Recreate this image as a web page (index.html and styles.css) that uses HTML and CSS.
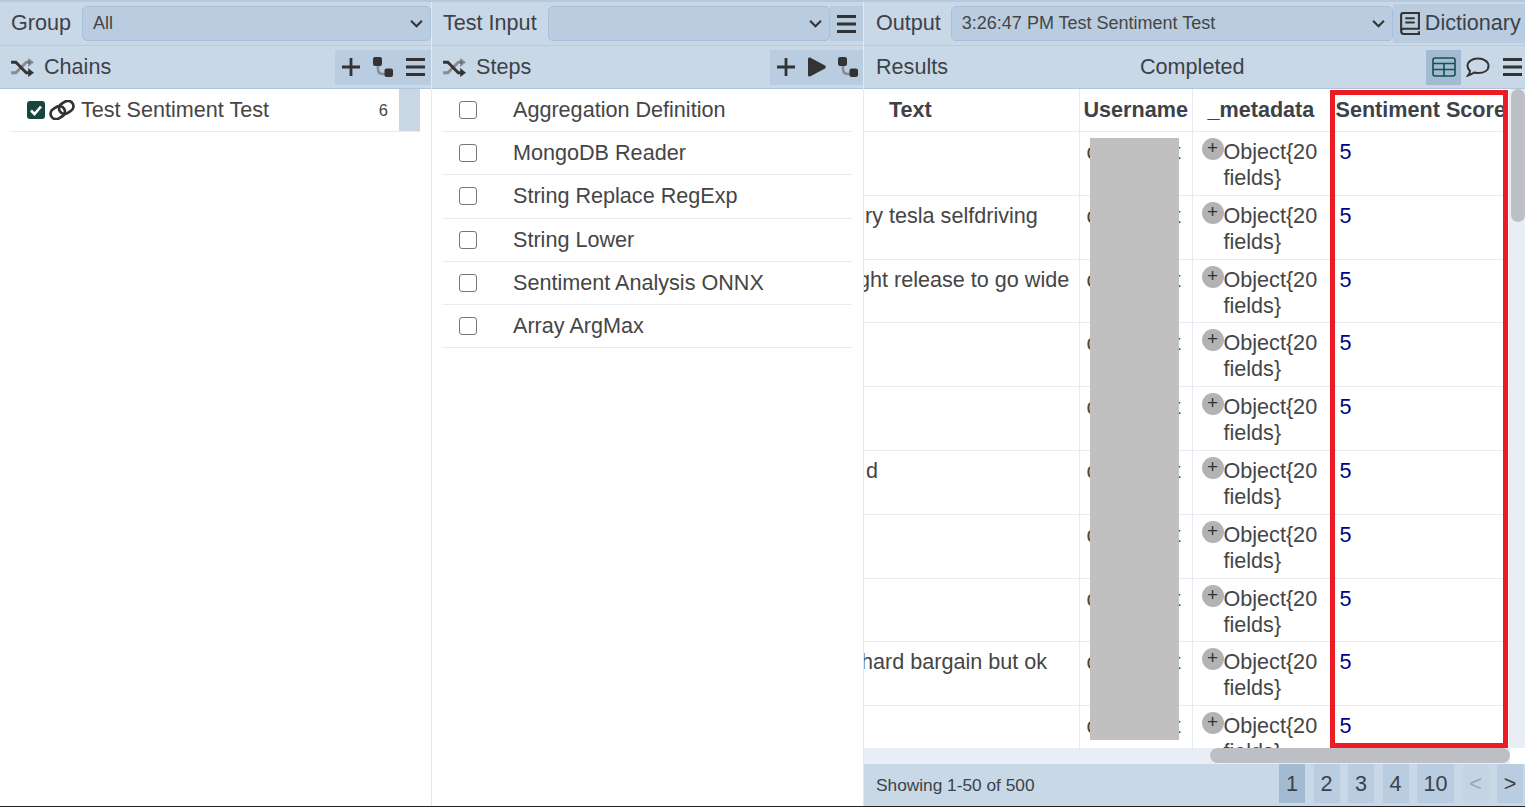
FILE: index.html
```html
<!DOCTYPE html>
<html lang="en">
<head>
	<meta charset="UTF-8">
	<title>Chains</title>
	<link rel="stylesheet" href="styles.css">
</head>
<body>
<svg class="defs" width="0" height="0">
	<symbol id="i-shuffle" viewBox="0 0 24 20">
		<path d="M0 4.500h5l11 11h4" fill="none" stroke="#333" stroke-width="3"/>
		<path d="M18 10.500l6 5-6 4.500z" fill="#333"/>
		<path d="M0 15.500h5l11-11h4" fill="none" stroke="#333" stroke-opacity=".45" stroke-width="3"/>
		<path d="M18 0l6 4.500-6 5z" fill="#333" fill-opacity=".45"/>
	</symbol>
	<symbol id="i-plus" viewBox="0 0 18 18">
		<path d="M9 0v18M0 9h18" stroke="#333" stroke-width="2.800"/>
	</symbol>
	<symbol id="i-menu" viewBox="0 0 19 18">
		<path d="M0 1.500h19M0 9h19M0 16.500h19" stroke="#333" stroke-width="3"/>
	</symbol>
	<symbol id="i-tree" viewBox="0 0 20 20">
		<path d="M5 8v4q0 5 5 5h2" fill="none" stroke="#333" stroke-opacity=".4" stroke-width="2.600"/>
		<rect x="0" y="0" width="9" height="9" rx="2" fill="#333"/>
		<rect x="11.500" y="11.500" width="8.500" height="8.500" rx="2" fill="#333"/>
	</symbol>
	<symbol id="i-play" viewBox="0 0 18 20">
		<path d="M0 2v16q0 2 2 1.500l15-8q1.500-1.500 0-3l-15-8q-2-.5-2 1.500z" fill="#333"/>
	</symbol>
	<symbol id="i-chev" viewBox="0 0 12 8">
		<path d="M1 1.500l5 5 5-5" fill="none" stroke="#333" stroke-width="1.900"/>
	</symbol>
	<symbol id="i-book" viewBox="0 0 20 22">
		<path d="M2 18V3q0-2 2-2h15v15H4.500Q2 16 2 18.500T4.500 21H19v-2.500" fill="none" stroke="#333" stroke-width="2"/>
		<path d="M6 6h9M6 10h9" stroke="#333" stroke-width="2"/>
	</symbol>
	<symbol id="i-table" viewBox="0 0 24 20">
		<rect x="1" y="1" width="22" height="18" rx="2" fill="none" stroke="#17504d" stroke-width="1.600"/>
		<path d="M1 6.500h22M1 12.500h22M12 6.500V19" stroke="#17504d" stroke-width="1.600"/>
	</symbol>
	<symbol id="i-chat" viewBox="0 0 24 20">
		<path d="M12 1.500c6 0 10.500 3 10.500 7.500s-4.500 7-10.500 7c-1.500 0-3-.2-4-.5-1.500 1.200-3.500 2.500-6 3 1.200-1.300 2-3 2-4.500C2.500 12.500 1.500 11 1.500 9c0-4.500 4.500-7.500 10.500-7.500z" fill="none" stroke="#333" stroke-width="2"/>
	</symbol>
	<symbol id="i-link" viewBox="0 0 26 20">
		<g fill="none" stroke="#333" stroke-width="2.700" transform="rotate(-32 13 10)">
			<rect x="0.500" y="4.500" width="15" height="11" rx="5.500"/>
			<rect x="10.500" y="4.500" width="15" height="11" rx="5.500"/>
		</g>
	</symbol>
</svg>

<div class="app">
	<!-- chains -->
	<section class="pane pane-side">
		<div class="bar bar-top">
			<span class="label">Group</span>
			<div class="select"><span>All</span><svg class="chev"><use href="#i-chev"/></svg></div>
		</div>
		<div class="bar bar-sub">
			<svg class="shuffle"><use href="#i-shuffle"/></svg>
			<span class="label">Chains</span>
			<div class="tools">
				<button class="tool"><svg class="ico"><use href="#i-plus"/></svg></button>
				<button class="tool"><svg class="ico-tree"><use href="#i-tree"/></svg></button>
				<button class="tool"><svg class="ico-menu"><use href="#i-menu"/></svg></button>
			</div>
		</div>
		<ul class="list">
			<li class="chain">
				<span class="check on"><svg viewBox="0 0 18 18" width="18" height="18"><path d="M4 9.500l3.500 3.500 6.500-7.500" fill="none" stroke="#fff" stroke-width="2.600"/></svg></span>
				<svg class="link"><use href="#i-link"/></svg>
				<span class="name">Test Sentiment Test</span>
				<span class="count">6</span>
				<span class="mark"></span>
			</li>
		</ul>
	</section>

	<!-- steps -->
	<section class="pane pane-side">
		<div class="bar bar-top">
			<span class="label">Test Input</span>
			<div class="select select-input"><span></span><svg class="chev"><use href="#i-chev"/></svg></div>
			<button class="tool tool-fill"><svg class="ico-menu"><use href="#i-menu"/></svg></button>
		</div>
		<div class="bar bar-sub">
			<svg class="shuffle"><use href="#i-shuffle"/></svg>
			<span class="label">Steps</span>
			<div class="tools tools-steps">
				<button class="tool"><svg class="ico"><use href="#i-plus"/></svg></button>
				<button class="tool"><svg class="ico-play"><use href="#i-play"/></svg></button>
				<button class="tool"><svg class="ico-tree"><use href="#i-tree"/></svg></button>
			</div>
		</div>
		<ul class="list">
			<li class="step"><span class="check"></span>Aggregation Definition</li>
			<li class="step"><span class="check"></span>MongoDB Reader</li>
			<li class="step"><span class="check"></span>String Replace RegExp</li>
			<li class="step"><span class="check"></span>String Lower</li>
			<li class="step"><span class="check"></span>Sentiment Analysis ONNX</li>
			<li class="step"><span class="check"></span>Array ArgMax</li>
		</ul>
	</section>

	<!-- results -->
	<section class="pane pane-main">
		<div class="bar bar-top">
			<span class="label">Output</span>
			<div class="select select-output"><span>3:26:47 PM Test Sentiment Test</span><svg class="chev"><use href="#i-chev"/></svg></div>
			<button class="tool-dict"><svg class="book"><use href="#i-book"/></svg><span class="dict-text">Dictionary</span></button>
		</div>
		<div class="bar bar-sub">
			<span class="label results">Results</span>
			<span class="label">Completed</span>
			<div class="tools tools-plain">
				<button class="tool active"><svg class="ico-wide"><use href="#i-table"/></svg></button>
				<button class="tool"><svg class="ico-wide"><use href="#i-chat"/></svg></button>
				<button class="tool"><svg class="ico-menu"><use href="#i-menu"/></svg></button>
			</div>
		</div>
		<div class="body-row">
			<div class="table-wrap">
				<table class="grid">
					<thead>
						<tr><th class="col-text">Text</th><th class="col-user">Username</th><th class="col-meta">_metadata</th><th class="col-score">Sentiment Score</th></tr>
					</thead>
					<tbody>
						<tr><td></td><td><span class="uname"><span>c</span><span>t</span></span></td><td><span class="obj"><i class="plus">+</i>Object{20 fields}</span></td><td class="score">5</td></tr>
						<tr><td class="cut-r">ry tesla selfdriving</td><td><span class="uname"><span>c</span><span>t</span></span></td><td><span class="obj"><i class="plus">+</i>Object{20 fields}</span></td><td class="score">5</td></tr>
						<tr><td class="cut-g">ght release to go wide</td><td><span class="uname"><span>c</span><span>t</span></span></td><td><span class="obj"><i class="plus">+</i>Object{20 fields}</span></td><td class="score">5</td></tr>
						<tr><td></td><td><span class="uname"><span>c</span><span>t</span></span></td><td><span class="obj"><i class="plus">+</i>Object{20 fields}</span></td><td class="score">5</td></tr>
						<tr><td></td><td><span class="uname"><span>c</span><span>t</span></span></td><td><span class="obj"><i class="plus">+</i>Object{20 fields}</span></td><td class="score">5</td></tr>
						<tr><td>d</td><td><span class="uname"><span>c</span><span>t</span></span></td><td><span class="obj"><i class="plus">+</i>Object{20 fields}</span></td><td class="score">5</td></tr>
						<tr><td></td><td><span class="uname"><span>c</span><span>t</span></span></td><td><span class="obj"><i class="plus">+</i>Object{20 fields}</span></td><td class="score">5</td></tr>
						<tr><td></td><td><span class="uname"><span>c</span><span>t</span></span></td><td><span class="obj"><i class="plus">+</i>Object{20 fields}</span></td><td class="score">5</td></tr>
						<tr><td class="cut-h">hard bargain but ok</td><td><span class="uname"><span>c</span><span>t</span></span></td><td><span class="obj"><i class="plus">+</i>Object{20 fields}</span></td><td class="score">5</td></tr>
						<tr><td></td><td><span class="uname"><span>c</span><span>t</span></span></td><td><span class="obj"><i class="plus">+</i>Object{20 fields}</span></td><td class="score">5</td></tr>
					</tbody>
				</table>
				<div class="redact"></div>
				<div class="callout"></div>
			</div>
			<div class="vscroll"><div class="vthumb"></div></div>
		</div>
		<div class="hscroll"><div class="hthumb"></div></div>
		<div class="pager">
			<span class="showing">Showing 1-50 of 500</span>
			<div class="pages">
				<button class="page current">1</button>
				<button class="page">2</button>
				<button class="page">3</button>
				<button class="page">4</button>
				<button class="page page-wide">10</button>
				<button class="page off">&lt;</button>
				<button class="page">&gt;</button>
			</div>
		</div>
	</section>
</div>
</body>
</html>
```
FILE: styles.css
```css
* {
	box-sizing: border-box;
}
html, body {
	margin: 0;
	padding: 0;
	height: 100%;
	overflow: hidden;
}
body {
	background: #fff;
	color: #454545;
	font-family: "Liberation Sans", Arial, sans-serif;
	font-size: 21.6px;
}
.defs {
	position: absolute;
}
.app {
	display: flex;
	height: 807px;
	border-top: 2px solid #b6c9df;
	border-bottom: 1px solid #222;
}
.pane {
	display: flex;
	flex-direction: column;
	min-width: 0;
	height: 100%;
}
.pane-side {
	width: 432px;
	border-right: 1px solid #e3e9f1;
}
.pane-main {
	width: 661px;
}

/* header bars */
.bar {
	display: flex;
	align-items: center;
	flex: none;
	background: #c9d8e6;
	padding-left: 11px;
}
.bar-top {
	height: 44px;
	border-bottom: 1px solid #b9cbdc;
}
.bar-sub {
	height: 43px;
	border-bottom: 1px solid #afc5de;
}
.label {
	color: #3d4248;
	white-space: nowrap;
}
.bar-top .label, .dict-text {
	margin-bottom: 2px;
}
.pane-main .bar {
	padding-left: 12px;
}
.results {
	width: 264px;
}

.select {
	display: flex;
	align-items: center;
	justify-content: space-between;
	flex: 1;
	height: 35px;
	margin-left: 11px;
	padding: 0 7px 0 10px;
	background: #bacde0;
	border: 1px solid #a6c0dc;
	border-radius: 5px;
	font-size: 18px;
}
.select-input {
	flex: none;
	width: 282px;
}
.select-output {
	flex: none;
	width: 442px;
	margin-left: 10px;
}
.chev {
	width: 13px;
	height: 9px;
}

.tools {
	display: flex;
	align-items: center;
	height: 35px;
	margin-left: auto;
	background: #bacce0;
}
.tools-plain {
	background: none;
}
.tool {
	display: flex;
	align-items: center;
	justify-content: center;
	width: 32px;
	height: 35px;
	padding: 0;
	border: 0;
	background: none;
}
.tools-steps .tool {
	width: 31px;
}
.tool.active {
	width: 35px;
	background: #a2bbd3;
}
.tools-plain .tool:nth-child(2) {
	width: 34px;
}
.tools-plain .tool:last-child {
	width: 30px;
	justify-content: flex-end;
	padding-right: 3px;
}
.tool-fill {
	width: 33px;
	background: #bacce0;
}
.tool-dict {
	display: flex;
	align-items: center;
	width: 132px;
	height: 39px;
	padding: 0 0 0 6px;
	border: 0;
	background: #bacce0;
	color: #3d4248;
	font: inherit;
}
.ico {
	width: 18px;
	height: 18px;
}
.ico-menu {
	width: 19px;
	height: 18px;
}
.ico-play {
	width: 18px;
	height: 20px;
}
.ico-tree {
	width: 20px;
	height: 20px;
}
.ico-wide {
	width: 24px;
	height: 20px;
}
.book {
	width: 21px;
	height: 23px;
	margin-right: 5px;
}
.shuffle {
	width: 23px;
	height: 19px;
	margin-right: 10px;
}

/* lists */
.list {
	flex: 1;
	margin: 0;
	padding: 0 11px;
	list-style: none;
}
.chain, .step {
	display: flex;
	align-items: center;
	height: 43.200px;
	padding-left: 16px;
	border-bottom: 1px solid #e6ebf2;
}
.check {
	display: inline-block;
	flex: none;
	width: 18px;
	height: 18px;
	background: #fff;
	border: 1px solid #767676;
	border-radius: 3px;
}
.step .check {
	margin-right: 36px;
}
.check.on {
	background: #17453f;
	border: 0;
}
.check svg {
	display: block;
}
.link {
	width: 26px;
	height: 20px;
	margin: 0 6px 0 4px;
}
.count {
	margin-left: auto;
	margin-right: 11px;
	font-size: 16.500px;
}
.mark {
	align-self: stretch;
	width: 21px;
	background: #c9d7e5;
}

/* results table */
.body-row {
	display: flex;
	flex: none;
	height: 659px;
}
.table-wrap {
	position: relative;
	flex: none;
	width: 646px;
	height: 659px;
	overflow: hidden;
}
.grid {
	width: 646px;
	table-layout: fixed;
	border-collapse: collapse;
}
.grid th, .grid td {
	padding: 0;
	border-bottom: 1px solid #e6ebf2;
	border-right: 1px solid #e6ebf2;
	text-align: left;
	vertical-align: top;
	overflow: hidden;
	line-height: 26px;
}
.grid th {
	height: 42.500px;
	padding-top: 8px;
	color: #3d4248;
	font-weight: bold;
	white-space: nowrap;
}
.grid td {
	height: 63.800px;
	padding: 7px 0 0 5px;
	white-space: nowrap;
}
.grid td:first-child {
	padding-left: 2px;
}
.grid td.cut-r {
	padding-left: 1px;
}
.grid td.cut-g {
	padding-left: 0;
	text-indent: -6px;
}
.grid td.cut-h {
	padding-left: 0;
	text-indent: -3px;
}
.grid td:nth-child(2) {
	padding-left: 7px;
}
.grid td:nth-child(3) {
	padding-left: 9px;
	white-space: normal;
}
.col-text {
	width: 215px;
}
th.col-text {
	padding-left: 25px;
}
.col-user {
	width: 113px;
}
.grid th.col-user {
	padding-left: 4px;
}
.col-meta {
	width: 139px;
}
.grid th.col-meta {
	padding-left: 15px;
}
.grid th.col-score {
	padding-left: 4px;
}
.grid td.score {
	padding-left: 8px;
	color: #00008b;
}
.uname {
	display: flex;
	justify-content: space-between;
	width: 94px;
}
.obj {
	display: flex;
	align-items: flex-start;
	width: 118px;
}
.plus {
	flex: none;
	width: 22px;
	height: 22px;
	margin-top: -1px;
	background: #b3b3b3;
	border-radius: 50%;
	color: #333;
	font-style: normal;
	font-size: 19px;
	line-height: 20px;
	text-align: center;
}

/* these two lie over the table */
.redact {
	position: absolute;
	left: 226px;
	top: 49px;
	width: 89px;
	height: 602px;
	background: #c0c0c0;
}
.callout {
	position: absolute;
	left: 466px;
	top: 1px;
	width: 178px;
	height: 658px;
	border: 5px solid #ed1c24;
}

/* scrollbars */
.vscroll {
	flex: 1;
	background: #e8edf6;
}
.vthumb {
	width: 14px;
	height: 133px;
	margin-left: 1px;
	background: #bcc0c5;
	border-radius: 7px;
}
.hscroll {
	flex: none;
	width: 646px;
	height: 16px;
	background: #e8edf6;
}
.hthumb {
	width: 300px;
	height: 15px;
	margin-left: 346px;
	background: #bcc0c5;
	border-radius: 8px;
}

/* pager */
.pager {
	display: flex;
	align-items: flex-start;
	flex: 1;
	padding-left: 12px;
	background: #c9d8e6;
}
.showing {
	padding-top: 11px;
	color: #3d4248;
	font-size: 17.300px;
}
.pages {
	display: flex;
	gap: 8.500px;
	margin-left: auto;
	margin-right: 2px;
}
.page {
	width: 26px;
	height: 39px;
	padding: 0;
	border: 0;
	background: #bacce0;
	color: #3d4248;
	font: inherit;
}
.page-wide {
	width: 37px;
}
.page.current {
	background: #a2bbd3;
}
.page.off {
	background: #c5d4e4;
	color: #98a4b0;
}
```
